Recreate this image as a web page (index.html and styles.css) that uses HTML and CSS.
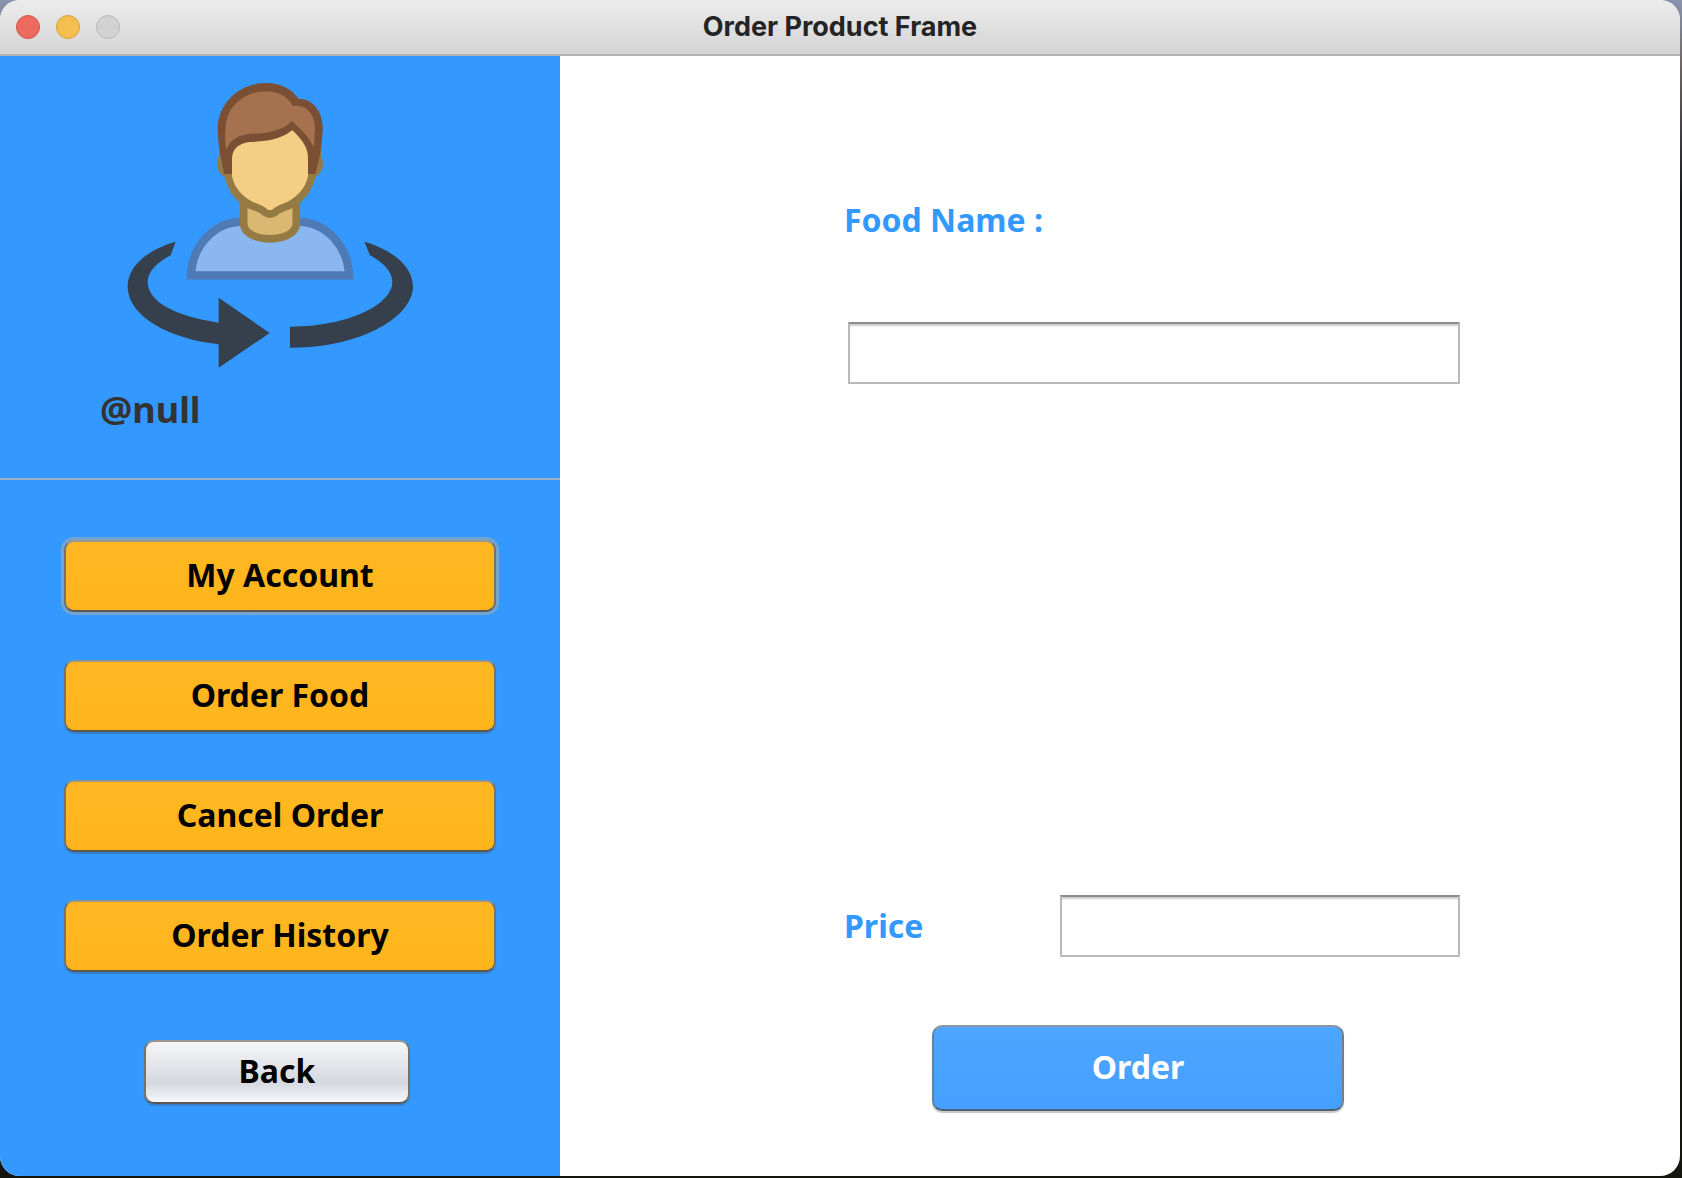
FILE: index.html
```html
<!DOCTYPE html>
<html lang="en">
<head>
<meta charset="utf-8">
<title>Order Product Frame</title>
<link rel="stylesheet" href="styles.css">
</head>
<body>
<div class="window">
  <header class="titlebar">
    <div class="lights">
      <button class="light light-close" type="button" aria-label="Close"></button>
      <button class="light light-minimize" type="button" aria-label="Minimize"></button>
      <button class="light light-zoom" type="button" aria-label="Zoom" disabled></button>
    </div>
    <h1 class="title">Order Product Frame</h1>
  </header>
  <div class="content">
    <aside class="sidebar">
      <section class="profile">
        <svg class="avatar" viewBox="0 0 960 930" aria-hidden="true">
          <path d="M243 616C246 530 310 455 400 455H560C650 455 714 530 717 616Z" fill="#8bb7f0" stroke="#4e7ab5" stroke-width="25"/>
          <path d="M401 385V460C401 522 559 522 559 460V385Z" fill="#dbb871" stroke="#967a44" stroke-width="23"/>
          <path d="M338 262C328 280 332 302 354 315C366 365 395 393 425 407C447 415 458 418 465 427Q480 437 495 427C502 418 515 415 535 407C565 393 594 365 606 315C628 302 632 280 622 262V170H338Z" fill="#f5ce85" stroke="#967a44" stroke-width="23" stroke-linejoin="round"/>
          <path d="M366 220H594V312C592 350 560 385 520 397C500 403 492 412 487 418Q480 422 473 418C468 412 460 403 440 397C400 385 368 350 366 312Z" fill="#f5ce85"/>
          <path d="M343 312C333 270 323 220 323 172C327 95 390 39 468 39C510 39 545 55 565 86C610 86 638 126 638 172C638 220 628 270 616 312H594V262C594 225 565 200 547 180C505 215 450 214 418 216C385 222 366 235 366 270V312Z" fill="#7a4f34"/>
          <path d="M348 240C345 215 345 190 347 165C354 105 405 65 465 64C505 64 534 80 549 108C595 102 615 140 615 175L612 232C595 197 568 174 546 153C514 185 465 191 425 191C385 193 360 210 348 240Z" fill="#a6714e"/>
          <path d="M197 515C110 540 52 590 53 652C56 740 175 806 326 823V893L479 789L326 683V758C205 740 115 700 113 637C113 605 142 577 182 556Z" fill="#36404d"/>
          <path d="M763 515C850 540 909 590 909 652C904 750 735 836 540 833V770C700 771 845 710 847 637C847 604 819 577 780 556Z" fill="#36404d"/>
        </svg>
        <p class="handle">@null</p>
      </section>
      <nav class="menu">
        <button class="button button-menu button-focus" type="button">My Account</button>
        <button class="button button-menu" type="button">Order Food</button>
        <button class="button button-menu" type="button">Cancel Order</button>
        <button class="button button-menu" type="button">Order History</button>
      </nav>
      <div class="back">
        <button class="button button-back" type="button">Back</button>
      </div>
    </aside>
    <main class="main">
      <form class="form">
        <label class="label" for="food">Food Name :</label>
        <div class="food-field"><input class="field" id="food" type="text"></div>
        <div class="price-row">
          <label class="label" for="price">Price</label>
          <input class="field" id="price" type="text">
        </div>
        <div class="submit">
          <button class="button button-order" type="button">Order</button>
        </div>
      </form>
    </main>
  </div>
</div>
</body>
</html>
```
FILE: styles.css
```css
* {
  box-sizing: border-box;
}

body {
  margin: 0;
  min-height: 100vh;
  padding: 0 2px 2px 0;
  display: flex;
  background: linear-gradient(to bottom, #8a94ad 0, #6f6a69 60px, #15171b 200px, #15150f 100%);
  font-family: "Noto Sans", "Open Sans", sans-serif;
  font-weight: 700;
}

.window {
  flex: 1;
  display: flex;
  flex-direction: column;
  overflow: hidden;
  border-radius: 20px;
  background: #fff;
}

.titlebar {
  display: grid;
  grid-template-columns: 1fr auto 1fr;
  align-items: center;
  height: 56px;
  padding: 0 16px;
  background: linear-gradient(#ececec, #d4d4d4);
  border-bottom: 2px solid #b4b4b4;
}

.lights {
  display: flex;
  gap: 16px;
}

.light {
  width: 24px;
  height: 24px;
  padding: 0;
  border: 1px solid;
  border-radius: 50%;
}

.light-close {
  background: #ed6a5f;
  border-color: #d25549;
}

.light-minimize {
  background: #f5bf4f;
  border-color: #d8a03a;
}

.light-zoom {
  background: #d2d2d2;
  border-color: #b8b8b8;
}

.title {
  margin: 0;
  font-family: Inter, sans-serif;
  font-size: 27px;
  line-height: 32px;
  color: #242424;
}

.content {
  flex: 1;
  display: grid;
  grid-template-columns: 1fr 2fr;
}

.sidebar {
  display: flex;
  flex-direction: column;
  background: #3399ff;
}

.profile {
  display: flex;
  flex-direction: column;
  height: 424px;
  padding: 14px 100px 0;
  border-bottom: 2px solid #9fb0c4;
}

.avatar {
  width: 320px;
  height: 310px;
  margin-left: 10px;
}

.handle {
  margin: 6px 0 0;
  font-size: 36px;
  line-height: 48px;
  color: #333;
}

.menu {
  display: flex;
  flex-direction: column;
  gap: 48px;
  padding: 60px 64px 0;
}

.button {
  padding: 0 0 2px;
  border: 2px solid;
  border-color: #9a968c #77736a #5c5850;
  border-radius: 10px;
  box-shadow: 0 2px 1px rgba(60, 70, 90, 0.3);
  font: inherit;
  font-size: 32px;
  line-height: 40px;
  color: #000;
}

.button-menu {
  height: 72px;
  background: linear-gradient(#ffb822, #ffb41b);
}

.button-focus {
  box-shadow: 0 0 0 3px #73a4cf;
}

.back {
  display: flex;
  justify-content: center;
  padding: 68px 150px 70px 144px;
}

.button-back {
  flex: 1;
  height: 64px;
  background: linear-gradient(#f5f6f7, #d6d9df 66%, #d9dce3 72%, #f6f8fc);
}

.main {
  display: flex;
  padding: 144px 220px 65px 284px;
}

.form {
  flex: 1;
  display: flex;
  flex-direction: column;
}

.label {
  font-size: 32px;
  line-height: 40px;
  color: #3399ff;
}

.food-field {
  display: flex;
  padding: 82px 0 0 4px;
}

.field {
  flex: 1;
  min-width: 0;
  height: 62px;
  padding: 0 12px;
  border: 2px solid #b9b9b9;
  border-top-color: #8d8d8d;
  border-radius: 0;
  background: #fff;
  box-shadow: inset 0 3px 2px -1px #ccc;
  font: inherit;
  font-size: 32px;
  outline: none;
}

.price-row {
  display: grid;
  grid-template-columns: 216px 1fr;
  align-items: center;
  margin-top: auto;
}

.submit {
  display: flex;
  padding: 68px 116px 0 88px;
}

.button-order {
  flex: 1;
  height: 86px;
  background: linear-gradient(#4da6ff, #449fff);
  border-color: #8d969e #6f7f8f #4e5f70;
  color: #fff;
}
```
